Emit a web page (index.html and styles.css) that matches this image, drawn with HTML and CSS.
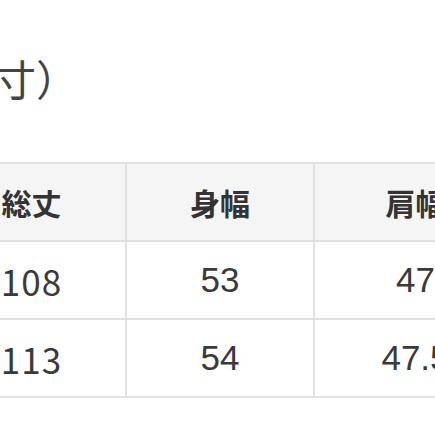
FILE: index.html
```html
<!DOCTYPE html>
<html lang="ja">
<head>
<meta charset="utf-8">
<link rel="stylesheet" href="styles.css">
</head>
<body>
<div class="page">
  <h2 class="title">（実寸）</h2>
  <table class="size-table">
    <colgroup>
      <col class="c1"><col class="c2"><col class="c3">
    </colgroup>
    <thead>
      <tr><th>総丈</th><th>身幅</th><th>肩幅</th></tr>
    </thead>
    <tbody>
      <tr><td class="first">108</td><td>53</td><td>47</td></tr>
      <tr><td class="first">113</td><td>54</td><td>47.5</td></tr>
    </tbody>
  </table>
</div>
</body>
</html>
```

FILE: styles.css
```css
html, body {
  margin: 0;
  padding: 0;
  background: #ffffff;
  overflow: hidden;
}
.page {
  width: 435px;
  height: 435px;
  overflow: hidden;
  font-family: "Liberation Sans", "Noto Sans CJK JP", sans-serif;
  color: #333333;
}
.title {
  margin: 0;
  padding-top: 54px;
  margin-left: -90px;
  font-family: "Noto Sans CJK JP", sans-serif;
  font-size: 42px;
  font-weight: 400;
  line-height: 48px;
  color: #444444;
  white-space: nowrap;
}
.size-table {
  margin-top: 60px;
  margin-left: -64px;
  border-collapse: collapse;
  table-layout: fixed;
  width: 580px;
}
.c1 { width: 189px; }
.c2 { width: 188px; }
.c3 { width: 203px; }
.size-table th,
.size-table td {
  border: 2px solid #e1e1e1;
  height: 76px;
  padding: 0;
  text-align: center;
  vertical-align: middle;
}
.size-table th {
  background: #f5f5f5;
  font-family: "Noto Sans CJK JP", sans-serif;
  font-weight: 700;
  font-size: 30px;
  color: #333333;
}
.size-table td {
  background: #ffffff;
  font-size: 35px;
  font-weight: 400;
  color: #3a3a3a;
}
.size-table td.first {
  font-family: "Noto Sans CJK JP", sans-serif;
  font-weight: 400;
  font-size: 35px;
  letter-spacing: 1px;
}
```
